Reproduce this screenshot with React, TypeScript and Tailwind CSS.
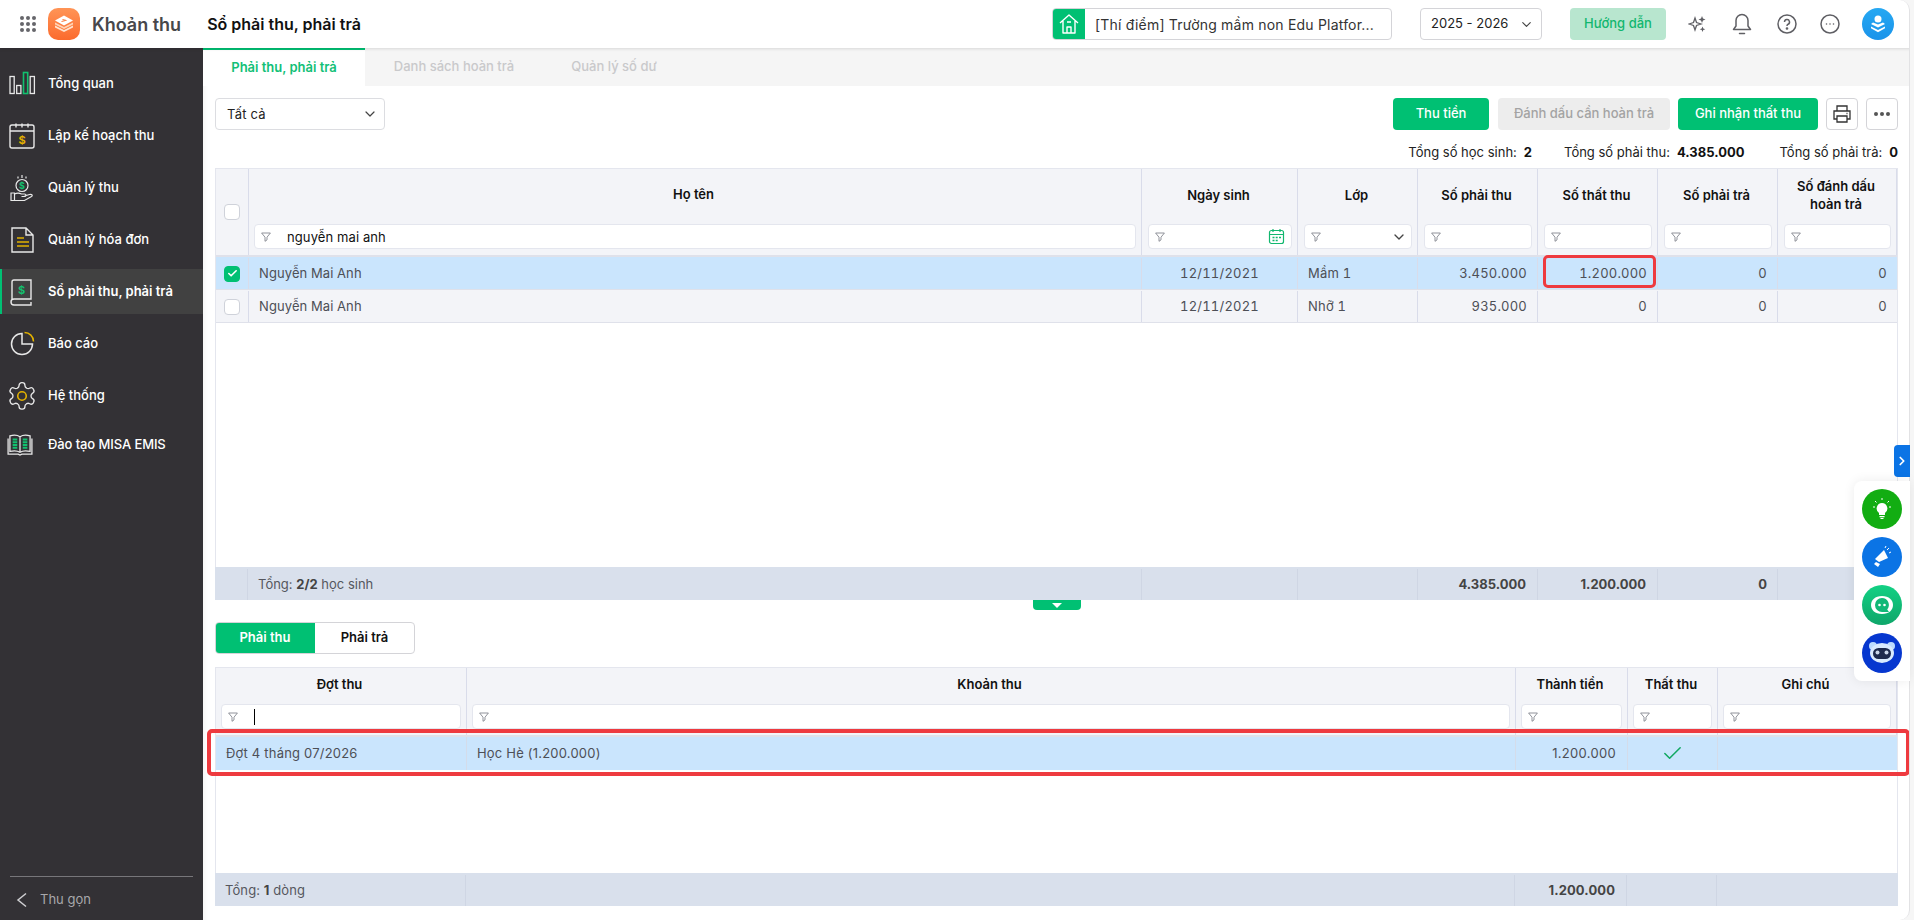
import React from 'react';
import { Check, ChevronDown, ChevronRight } from 'lucide-react';

const Funnel = () => (
  <svg width="10" height="10" viewBox="0 0 10 10" fill="none" stroke="#85878f" strokeWidth="0.9" className="shrink-0">
    <path d="M.6 1h8.800L6 5.200v2.700L4 9.300V5.200z" strokeLinejoin="round" />
  </svg>
);

const FilterInput = ({ value, caret, children }: { value?: string; caret?: boolean; children?: React.ReactNode }) => (
  <div className="flex h-[25px] flex-1 items-center rounded border border-[#e4e6ee] bg-white pl-[6px] pr-[6px]">
    <Funnel />
    {value && <span className="ml-[16px] pt-[2px] text-[13px] tracking-[0.1px] text-[#111]">{value}</span>}
    {caret && <span className="ml-[16px] h-[16px] w-px bg-black" />}
    <span className="flex-1" />
    {children}
  </div>
);

const HeadCell = ({ title, w, children }: { title: React.ReactNode; w: string; children?: React.ReactNode }) => (
  <div className={`flex flex-col border-r border-[#d9dcea] pl-[6px] pr-[5px] ${w}`}>
    <div className="mb-[4px] flex h-[51px] items-center justify-center pr-[3px] text-center text-[13px] leading-[18px] font-semibold text-[#111]">
      {title}
    </div>
    <div className="flex">{children ?? <FilterInput />}</div>
  </div>
);

const SubHeadCell = ({ title, w, caret }: { title: string; w: string; caret?: boolean }) => (
  <div className={`flex flex-col border-r border-[#d9dcea] px-[5px] ${w}`}>
    <div className="mb-[3px] flex h-[33px] items-center justify-center pr-[3px] text-[13px] font-semibold text-[#111]">{title}</div>
    <div className="flex"><FilterInput caret={caret} /></div>
  </div>
);

const CheckBox = ({ checked }: { checked?: boolean }) => (
  <span className={`flex h-4 w-4 items-center justify-center rounded-[4px] border ${checked ? 'border-[#00c073] bg-[#00c073]' : 'border-[#cfd2da] bg-white'}`}>
    {checked && <Check size={11} strokeWidth={3.5} className="text-white" />}
  </span>
);

const rows = [
  { cls: 'Mầm 1', thu: '3.450.000', that: '1.200.000', bg: 'bg-[#cae5fd]', on: true },
  { cls: 'Nhỡ 1', thu: '935.000', that: '0', bg: 'bg-[#f3f4f8]', on: false },
];

const cols = ['w-[156px]', 'w-[120px]', 'w-[120px]', 'w-[120px]', 'w-[120px]', 'w-[119px]'];

const MainTable = () => (
  <div className="flex h-[432px] w-[1683px] flex-col border-x border-t border-[#e4e6ee]">
    <div className="flex h-[88px] shrink-0 border-b-2 border-[#dfe1ea] bg-[#f3f4f8]">
      <div className="flex w-[33px] shrink-0 items-center justify-center border-r border-[#d9dcea]"><CheckBox /></div>
      <div className="flex w-[893px] shrink-0 flex-col border-r border-[#d9dcea] px-[5px]">
        <div className="mb-[4px] flex h-[51px] items-center justify-center pr-[3px] text-[13px] font-semibold text-[#111]">Họ tên</div>
        <div className="flex"><FilterInput value="nguyễn mai anh" /></div>
      </div>
      <HeadCell title="Ngày sinh" w={cols[0]}>
        <FilterInput>
          <svg width="17" height="17" viewBox="0 0 17 17" fill="none" stroke="#12b76f" strokeWidth="1.2">
            <rect x="1.5" y="2.5" width="14" height="13" rx="2" />
            <path d="M1.5 6.500h14M5 1v3M12 1v3" />
            <path d="M4.500 9.500h2M7.700 9.500h2M11 9.500h2M4.500 12.500h2M7.700 12.500h2" strokeWidth="1.5" />
          </svg>
        </FilterInput>
      </HeadCell>
      <HeadCell title="Lớp" w={cols[1]}>
        <FilterInput><ChevronDown size={16} strokeWidth={2} className="-mr-[2px] text-[#444]" /></FilterInput>
      </HeadCell>
      <HeadCell title="Số phải thu" w={cols[2]} />
      <HeadCell title="Số thất thu" w={cols[3]} />
      <HeadCell title="Số phải trả" w={cols[4]} />
      <HeadCell title={<>Số đánh dấu<br />hoàn trả</>} w={cols[5]} />
    </div>
    {rows.map((r) => (
      <div key={r.cls} className={`flex h-[33px] shrink-0 border-b border-[#dfe1ea] pt-px text-[13px] tracking-[0.2px] text-[#4d4f56] tabular-nums ${r.bg}`}>
        <div className="flex w-[33px] shrink-0 items-center justify-center border-r border-[#d9dcea]"><CheckBox checked={r.on} /></div>
        <div className="flex w-[893px] shrink-0 items-center border-r border-[#d9dcea] pl-[10px] tracking-[0.1px]">Nguyễn Mai Anh</div>
        <div className={`flex items-center justify-center border-r border-[#d9dcea] ${cols[0]}`}>12/11/2021</div>
        <div className={`flex items-center border-r border-[#d9dcea] pl-[10px] ${cols[1]}`}>{r.cls}</div>
        <div className={`flex items-center justify-end border-r border-[#d9dcea] pr-[10px] ${cols[2]}`}>{r.thu}</div>
        <div className={`flex items-center justify-end border-r border-[#d9dcea] pr-[10px] ${cols[3]}`}>{r.that}</div>
        <div className={`flex items-center justify-end border-r border-[#d9dcea] pr-[10px] ${cols[4]}`}>0</div>
        <div className={`flex items-center justify-end pr-[10px] ${cols[5]}`}>0</div>
      </div>
    ))}
    <div className="flex-1" />
    <div className="-mx-px flex h-[33px] shrink-0 bg-[#d9e0ec] pt-[2px] text-[13px] text-[#55575e]">
      <div className="w-[33px] shrink-0 border-r border-[#cfd6e4]" />
      <div className="flex w-[894px] shrink-0 items-center border-r border-[#cfd6e4] pl-[10px]">
        Tổng:&nbsp;<b className="font-bold text-[#444]">2/2</b>&nbsp;học sinh
      </div>
      <div className={`border-r border-[#cfd6e4] ${cols[0]}`} />
      <div className={`border-r border-[#cfd6e4] ${cols[1]}`} />
      <div className={`flex items-center justify-end border-r border-[#cfd6e4] pr-[11px] font-bold text-[#444] ${cols[2]}`}>4.385.000</div>
      <div className={`flex items-center justify-end border-r border-[#cfd6e4] pr-[11px] font-bold text-[#444] ${cols[3]}`}>1.200.000</div>
      <div className={`flex items-center justify-end border-r border-[#cfd6e4] pr-[10px] font-bold text-[#444] ${cols[4]}`}>0</div>
      <div className={cols[5]} />
    </div>
  </div>
);

const SubTable = () => (
  <div className="mt-[13px] flex h-[239px] w-[1683px] flex-col border-x border-t border-[#e4e6ee]">
    <div className="flex h-[69px] shrink-0 border-b-2 border-[#dfe1ea] bg-[#f3f4f8]">
      <SubHeadCell title="Đợt thu" w="w-[251px]" caret />
      <SubHeadCell title="Khoản thu" w="w-[1049px]" />
      <SubHeadCell title="Thành tiền" w="w-[112px]" />
      <SubHeadCell title="Thất thu" w="w-[90px]" />
      <SubHeadCell title="Ghi chú" w="w-[179px]" />
    </div>
    <div className="flex h-[33px] shrink-0 bg-[#cae5fd] text-[13px] tracking-[0.2px] text-[#4d4f56]">
      <div className="flex w-[251px] items-center border-r border-[#d4dcea] pl-[10px]">Đợt 4 tháng 07/2026</div>
      <div className="flex w-[1049px] items-center border-r border-[#d4dcea] pl-[10px]">Học Hè (1.200.000)</div>
      <div className="flex w-[112px] items-center justify-end border-r border-[#d4dcea] pr-[11px] tracking-[0.3px]">1.200.000</div>
      <div className="flex w-[90px] items-center justify-center border-r border-[#d4dcea]"><Check size={23} strokeWidth={1.6} className="text-[#12a862]" /></div>
      <div className="w-[179px]" />
    </div>
    <div className="flex-1" />
    <div className="-mx-px flex h-[33px] shrink-0 bg-[#d9e0ec] pt-[2px] text-[13px] tracking-[0.1px] text-[#55575e]">
      <div className="flex w-[251px] items-center border-r border-[#cfd6e4] pl-[10px]">Tổng:&nbsp;<b className="font-bold text-[#444]">1</b>&nbsp;dòng</div>
      <div className="w-[1049px] border-r border-[#cfd6e4]" />
      <div className="flex w-[112px] items-center justify-end border-r border-[#cfd6e4] pr-[11px] font-bold text-[#444]">1.200.000</div>
      <div className="w-[90px] border-r border-[#cfd6e4]" />
      <div className="flex-1" />
    </div>
  </div>
);

// icon menu trái: nét trắng, điểm nhấn vàng hoặc xanh
const navIcons: Record<string, React.ReactNode> = {
  overview: (
    <svg width="28" height="28" viewBox="0 0 28 28" fill="none" stroke="#e8e8e8" strokeWidth="1.3">
      <rect x="1" y="6.500" width="4.200" height="17" />
      <rect x="7.700" y="15.500" width="4.200" height="8" />
      <rect x="14.500" y="2.500" width="4.200" height="21" stroke="#12c06f" strokeWidth="1.6" />
      <rect x="21.200" y="6.500" width="4.200" height="17" />
    </svg>
  ),
  plan: (
    <svg width="28" height="28" viewBox="0 0 28 28" fill="none" stroke="#e8e8e8" strokeWidth="1.4" className="-ml-[1px]">
      <rect x="2" y="3" width="24" height="23" rx="2" />
      <path d="M2 9h24M8 1.500v4M14 1.500v4M20 1.500v4" />
      <text x="14" y="22" fontSize="11" fontWeight="700" fill="#e2b100" stroke="none" textAnchor="middle" fontFamily="Inter">$</text>
    </svg>
  ),
  collect: (
    <svg width="28" height="28" viewBox="0 0 28 28" fill="none" stroke="#e8e8e8" strokeWidth="1.200">
      <circle cx="13" cy="11.500" r="6" />
      <path d="M13 1v3M9 2.500v2M17 2.500v2" />
      <text x="13" y="15" fontSize="9" fontWeight="700" fill="#12c06f" stroke="none" textAnchor="middle" fontFamily="Inter">$</text>
      <path d="M2 19h3.500v7.500H2zM5.500 20c3-1.500 5-1 7 0h3c2 0 2 2.500 0 2.500h-3M15.500 22l5-1.500c2.500-.7 3.500 1 2 2l-7 4h-10" />
    </svg>
  ),
  invoice: (
    <svg width="28" height="28" viewBox="0 0 28 28" fill="none" stroke="#e8e8e8" strokeWidth="1.4" className="-ml-[1px]">
      <path d="M4 2h14l7 7v17H4zM18 2v7h7" />
      <path d="M9 12h7M9 16h12M9 20h12" stroke="#e2b100" strokeWidth="1.6" />
    </svg>
  ),
  book: (
    <svg width="28" height="28" viewBox="0 0 28 28" fill="none" stroke="#e8e8e8" strokeWidth="1.4" className="-ml-[2px]">
      <path d="M5 21V4a2 2 0 0 1 2-2h17v19H7a2.500 2.500 0 0 0 0 6h17v-3" />
      <text x="14.500" y="16" fontSize="11" fontWeight="700" fill="#12c06f" stroke="none" textAnchor="middle" fontFamily="Inter">$</text>
    </svg>
  ),
  report: (
    <svg width="28" height="28" viewBox="0 0 28 28" fill="none" stroke="#e8e8e8" strokeWidth="1.5" className="-ml-[1px]">
      <path d="M14 3.500a10.500 10.500 0 1 0 10.500 10.500H14z" />
      <path d="M16.500 2.500a9 9 0 0 1 9 9" stroke="#e2b100" />
    </svg>
  ),
  system: (
    <svg width="32" height="32" viewBox="0 0 24 24" fill="none" stroke="#e8e8e8" strokeWidth="1" className="-my-[2px] -ml-[3px]">
      <path d="M12.200 2h-.4a2 2 0 0 0-2 2v.2a2 2 0 0 1-1 1.700l-.4.300a2 2 0 0 1-2 0l-.2-.1a2 2 0 0 0-2.700.7l-.2.400a2 2 0 0 0 .7 2.700l.2.100a2 2 0 0 1 1 1.700v.5a2 2 0 0 1-1 1.700l-.2.100a2 2 0 0 0-.7 2.700l.2.400a2 2 0 0 0 2.700.7l.2-.1a2 2 0 0 1 2 0l.4.300a2 2 0 0 1 1 1.700v.2a2 2 0 0 0 2 2h.4a2 2 0 0 0 2-2v-.2a2 2 0 0 1 1-1.700l.4-.3a2 2 0 0 1 2 0l.2.100a2 2 0 0 0 2.700-.7l.2-.4a2 2 0 0 0-.7-2.700l-.2-.1a2 2 0 0 1-1-1.700v-.5a2 2 0 0 1 1-1.700l.2-.1a2 2 0 0 0 .7-2.700l-.2-.4a2 2 0 0 0-2.700-.7l-.2.100a2 2 0 0 1-2 0l-.4-.3a2 2 0 0 1-1-1.700V4a2 2 0 0 0-2-2z" />
      <circle cx="12" cy="12" r="3.200" stroke="#e2b100" strokeWidth="1.200" />
    </svg>
  ),
  training: (
    <svg width="26" height="22" viewBox="0 0 28 24" fill="none" stroke="#e8e8e8" strokeWidth="1.4" className="-ml-[2px]">
      <path d="M3 2c4-1 8-1 11 1 3-2 7-2 11-1v17c-4-1-8-1-11 1-3-2-7-2-11-1zM14 3v17" />
      <path d="M1 5v17h11l2 1 2-1h11V5" />
      <path d="M6 6h5M6 9h5M6 12h5M6 15h5M17 6h5M17 9h5M17 12h5M17 15h5" stroke="#12c06f" strokeWidth="2" />
    </svg>
  ),
};

const navItems = [
  { key: 'overview', label: 'Tổng quan' },
  { key: 'plan', label: 'Lập kế hoạch thu' },
  { key: 'collect', label: 'Quản lý thu' },
  { key: 'invoice', label: 'Quản lý hóa đơn' },
  { key: 'book', label: 'Sổ phải thu, phải trả', active: true },
  { key: 'report', label: 'Báo cáo' },
  { key: 'system', label: 'Hệ thống' },
  { key: 'training', label: 'Đào tạo MISA EMIS', last: true },
];

const Sidebar = () => (
  <aside className="flex w-[203px] shrink-0 flex-col bg-[#333135] pt-[13px]">
    <div className="flex flex-1 flex-col gap-[7px]">
      {navItems.map((n) => (
        <div
          key={n.key}
          className={`flex h-[45px] items-center border-l-2 pl-[7px] text-[13px] font-medium text-white ${n.active ? 'border-[#00c073] bg-[#414141] font-semibold' : 'border-transparent'} ${n.last ? '-mt-[3px] tracking-[-0.1px]' : ''}`}
        >
          <span className="flex w-[39px] justify-start">{navIcons[n.key]}</span>
          {n.label}
        </div>
      ))}
    </div>
    <div className="mx-[10px] flex h-[44px] items-center border-t border-[#77767a] pl-[6px] pt-[2px] text-[13px] text-[#a8a8ab]">
      <svg width="12" height="16" viewBox="0 0 12 16" fill="none" stroke="#cfcfd2" strokeWidth="1.500">
        <path d="M10 1.500L2 8l8 6.500" />
      </svg>
      <span className="ml-[12px]">Thu gọn</span>
    </div>
  </aside>
);

const Header = () => (
  <header className="relative z-10 flex h-[48px] shrink-0 items-center bg-white shadow-[0_1px_3px_rgba(0,0,0,0.12)]">
    <div className="ml-[20px] grid h-[16px] w-[16px] grid-cols-3 gap-[2px]">
      {Array.from({ length: 9 }).map((_, i) => (
        <span key={i} className="h-[4px] w-[4px] rounded-full bg-[#66666b]" />
      ))}
    </div>
    <div className="ml-[12px] flex h-[32px] w-[32px] items-center justify-center rounded-[10px] bg-gradient-to-b from-[#ff9456] to-[#fb6a2c]">
      <svg width="20" height="20" viewBox="0 0 20 20">
        <path d="M1 11.500l9 4.500 9-4.500v2l-9 4.500-9-4.500z" fill="#ffe3cf" />
        <path d="M1 8.500l9 4.500 9-4.500v2l-9 4.500-9-4.500z" fill="#ffd3b5" />
        <path d="M10 1.500l9 5-9 5-9-5z" fill="#fff" />
        <path d="M7.500 7.500l4-1M8.500 5.500l4 1" stroke="#f97a3c" strokeWidth="1" />
      </svg>
    </div>
    <span className="ml-[12px] text-[18px] font-semibold text-[#47474b]">Khoản thu</span>
    <span className="ml-[26px] text-[16px] font-semibold text-[#111]">Sổ phải thu, phải trả</span>
    <div className="flex-1" />
    <div className="flex h-[32px] w-[340px] items-center overflow-hidden rounded border border-[#d4d4d8]">
      <span className="flex h-full w-[32px] items-center justify-center bg-[#00c073]">
        <svg width="22" height="22" viewBox="0 0 22 22" fill="none" stroke="#fff" strokeWidth="1.400" strokeLinejoin="round">
          <path d="M2 10l9-8 9 8M5 8v12h12V8" />
          <path d="M9 20v-6h4v6M9 9h4" />
        </svg>
      </span>
      <span className="ml-[10px] text-[14px] tracking-[0.2px] whitespace-nowrap text-[#333]">[Thí điểm] Trường mầm non Edu Platfor...</span>
    </div>
    <div className="ml-[28px] flex h-[32px] w-[122px] items-center justify-between rounded border border-[#d4d4d8] pl-[10px] pr-[7px] text-[13px] text-[#222]">
      2025 - 2026
      <ChevronDown size={15} strokeWidth={1.8} className="text-[#444]" />
    </div>
    <button className="ml-[28px] flex h-[32px] w-[96px] items-center justify-center rounded bg-[#b8e6cf] text-[13px] font-medium text-[#12b76f]">
      Hướng dẫn
    </button>
    <svg width="20" height="20" viewBox="0 0 20 20" fill="#5f5f64" className="ml-[22px]">
      <path d="M7 4l1.500 4.500L13 10l-4.500 1.500L7 16l-1.500-4.500L1 10l4.500-1.500z" fill="none" stroke="#5f5f64" strokeWidth="1.300" />
      <path d="M14 2l1 2.500L17.500 5.500 15 6.500 14 9l-1-2.500L10.500 5.500 13 4.500zM14.500 12.500l.8 2 2 .8-2 .8-.8 2-.8-2-2-.8 2-.8z" />
    </svg>
    <svg width="20" height="24" viewBox="0 0 20 24" fill="none" stroke="#5f5f64" strokeWidth="1.500" className="ml-[24px]">
      <path d="M10 2.500a6 6 0 0 0-6 6v5.500l-2.500 3.500h17l-2.500-3.500V8.500a6 6 0 0 0-6-6z" strokeLinejoin="round" />
      <path d="M7.500 21.500h5" strokeLinecap="round" />
    </svg>
    <svg width="20" height="20" viewBox="0 0 20 20" fill="none" stroke="#5f5f64" strokeWidth="1.500" className="ml-[25px]">
      <circle cx="10" cy="10" r="9" />
      <path d="M7.500 8a2.500 2.500 0 1 1 3.500 2.300c-.7.300-1 .8-1 1.700" />
      <circle cx="10" cy="14.500" r=".6" fill="#5f5f64" />
    </svg>
    <svg width="20" height="20" viewBox="0 0 20 20" fill="none" stroke="#5f5f64" strokeWidth="1.500" className="ml-[23px]">
      <circle cx="10" cy="10" r="9" />
      <path d="M6.500 10h.01M10 10h.01M13.500 10h.01" strokeWidth="1.600" strokeLinecap="round" />
    </svg>
    <span className="ml-[22px] mr-[20px] flex h-[32px] w-[32px] items-center justify-center rounded-full bg-gradient-to-b from-[#26a8f2] to-[#1a93ea]">
      <svg width="20" height="20" viewBox="0 0 20 20" fill="#fff">
        <circle cx="10" cy="5" r="3.500" />
        <path d="M3 10l7 3.500 7-3.500-2-1.500-5 2-5-2z" />
        <path d="M3 12.500l7 3.500 7-3.500v1.800l-7 4-7-4z" />
      </svg>
    </span>
  </header>
);

const Actions = () => (
  <div className="flex h-[32px] items-center justify-between">
    <div className="flex h-[32px] w-[170px] items-center justify-between rounded border border-[#dcdde1] pl-[11px] pr-[6px] text-[13px] tracking-[0.2px] text-[#222]">
      <span className="pt-[2px]">Tất cả</span>
      <ChevronDown size={16} strokeWidth={1.8} className="text-[#444]" />
    </div>
    <div className="flex items-center gap-[8px]">
      <button className="mr-px h-[32px] w-[96px] rounded bg-[#00c073] text-[13px] font-medium text-white">Thu tiền</button>
      <button className="h-[32px] w-[172px] rounded bg-[#ededed] text-[13px] font-medium text-[#a3a3a3]">Đánh dấu cần hoàn trả</button>
      <button className="h-[32px] w-[140px] rounded bg-[#00c073] text-[13px] font-medium text-white">Ghi nhận thất thu</button>
      <button className="flex h-[32px] w-[32px] items-center justify-center rounded border border-[#d4d4d8]">
        <svg width="20" height="20" viewBox="0 0 20 20" fill="none" stroke="#333" strokeWidth="1.300">
          <path d="M5 7V2h10v5M5 15H2V7h16v8h-3M5 12h10v6H5z" />
          <path d="M14.500 9.500h1" />
        </svg>
      </button>
      <button className="flex h-[32px] w-[32px] items-center justify-center rounded border border-[#d4d4d8] pb-[1px]">
        <span className="flex gap-[2px]">
          <i className="h-[4px] w-[4px] rounded-full bg-[#555]" />
          <i className="h-[4px] w-[4px] rounded-full bg-[#555]" />
          <i className="h-[4px] w-[4px] rounded-full bg-[#555]" />
        </span>
      </button>
    </div>
  </div>
);

const Summary = () => (
  <div className="flex h-[38px] items-center justify-end pt-[7px] text-[13px] text-[#222]">
    <span>Tổng số học sinh:<b className="ml-[7px] font-bold text-[#111]">2</b></span>
    <span className="ml-[32px]">Tổng số phải thu:<b className="ml-[7px] font-bold text-[#111]">4.385.000</b></span>
    <span className="ml-[35px]">Tổng số phải trả:<b className="ml-[7px] font-bold text-[#111]">0</b></span>
  </div>
);

const Widgets = () => (
  <div className="absolute left-[1854px] top-[481px] flex h-[200px] w-[56px] flex-col items-start gap-[8px] rounded-l-lg bg-white pl-[8px] pt-[8px] shadow-[0_0_12px_rgba(0,0,0,0.08)]">
    <span className="flex h-[40px] w-[40px] items-center justify-center rounded-full bg-[#12ad12]">
      <svg width="26" height="26" viewBox="0 0 26 26" fill="#fff">
        <path d="M13 7a5.500 5.500 0 0 0-3 10v2h6v-2a5.500 5.500 0 0 0-3-10zM10.500 20h5v1.200h-5zM11.500 22h3v1h-3z" />
        <path d="M4 11h2M20 11h2M6 5l1.500 1.500M20 5l-1.500 1.500M13 2v2" stroke="#fff" strokeWidth="1" />
      </svg>
    </span>
    <span className="flex h-[40px] w-[40px] items-center justify-center rounded-full bg-[#0b74e5]">
      <svg width="26" height="26" viewBox="0 0 26 26" fill="#fff">
        <path d="M6 15l9-9 4 8-9 4z" />
        <path d="M7 18l4 2-2 3-4-3z" />
        <path d="M18 6l2-2M20 9l2-1M16 4l1-2" stroke="#fff" strokeWidth="1" />
      </svg>
    </span>
    <span className="flex h-[40px] w-[40px] items-center justify-center rounded-full bg-gradient-to-b from-[#12d184] to-[#0fa66a]">
      <svg width="30" height="30" viewBox="0 0 30 30">
        <path d="M15 6c7 0 11 4 11 9s-4 9-11 9-11-4-11-9 4-9 11-9z" fill="#fff" />
        <path d="M15 8a7 7 0 1 0 0 14h7l-1.800-2.500A7 7 0 0 0 15 8z" fill="#11b877" />
        <circle cx="12.500" cy="15" r="1.300" fill="#fff" />
        <circle cx="17.500" cy="15" r="1.300" fill="#fff" />
      </svg>
    </span>
    <span className="flex h-[40px] w-[40px] items-center justify-center rounded-full bg-[#0637cf]">
      <svg width="34" height="34" viewBox="0 0 34 34">
        <circle cx="8" cy="10" r="4" fill="#bcdcff" />
        <circle cx="26" cy="10" r="4" fill="#bcdcff" />
        <ellipse cx="17" cy="17" rx="12" ry="10" fill="#d9ebff" />
        <rect x="8" y="12" width="18" height="11" rx="5.500" fill="#1d2a4d" />
        <circle cx="12.500" cy="16.500" r="2" fill="#c9d6ea" />
        <circle cx="21.500" cy="16.500" r="2" fill="#c9d6ea" />
      </svg>
    </span>
  </div>
);

export default function App() {
  return (
    <div className="relative flex h-[920px] w-[1914px] flex-col overflow-hidden bg-white font-['Inter','Noto_Sans',sans-serif]">
      <Header />
      <div className="flex min-h-0 flex-1">
        <Sidebar />
        <main className="flex min-w-0 flex-1 flex-col shadow-[inset_6px_0_6px_-6px_rgba(0,0,0,0.08)]">
          <div className="flex h-[38px] shrink-0 items-center bg-[#f5f5f5] text-[13px] font-medium text-[#c9c9cb]">
            <div className="flex h-full w-[162px] items-center justify-center border-t-2 border-[#00c073] bg-white font-semibold text-[#12c077]">
              Phải thu, phải trả
            </div>
            <div className="flex h-full w-[178px] items-center justify-center">Danh sách hoàn trả</div>
            <div className="ml-[16px] flex h-full w-[110px] items-center justify-center">Quản lý số dư</div>
          </div>
          <div className="flex-1 pl-[12px] pt-[12px]">
            <div className="w-[1683px]">
              <Actions />
              <Summary />
            </div>
            <MainTable />
            <div className="mt-[22px] flex h-[32px] w-[200px] overflow-hidden rounded border border-[#d4d4d8] text-[13px] font-semibold">
              <span className="-my-px -ml-px flex w-[100px] items-center justify-center bg-[#00c073] text-white">Phải thu</span>
              <span className="flex flex-1 items-center justify-center text-[#111]">Phải trả</span>
            </div>
            <SubTable />
          </div>
        </main>
      </div>

      {/* lớp phủ: khung đỏ chú thích, tay kéo, viền bo bên phải, thanh tiện ích */}
      <div className="absolute left-[1543px] top-[255px] h-[33px] w-[113px] rounded-[5px] border-[3px] border-[#ee3a3f]" />
      <div className="absolute left-[207px] top-[729px] h-[47px] w-[1703px] rounded-[5px] border-[4px] border-[#ee3a3f]" />
      <div className="absolute left-[1033px] top-[600px] flex h-[10px] w-[48px] items-start justify-center rounded-b bg-[#00c073] pt-[3px]">
        <span className="h-0 w-0 border-x-[5px] border-t-[5px] border-x-transparent border-t-white" />
      </div>
      <div className="pointer-events-none absolute inset-y-0 left-0 right-[4px] z-20 rounded-r-[10px] border-r border-[#e2e2e4] shadow-[0_0_0_100px_#f6f6f6]" />
      <div className="absolute left-[1894px] top-[445px] z-30 flex h-[32px] w-[16px] items-center justify-center rounded-l bg-[#0b74e5]">
        <ChevronRight size={14} strokeWidth={3} className="text-white" />
      </div>
      <div className="z-30"><Widgets /></div>
    </div>
  );
}
